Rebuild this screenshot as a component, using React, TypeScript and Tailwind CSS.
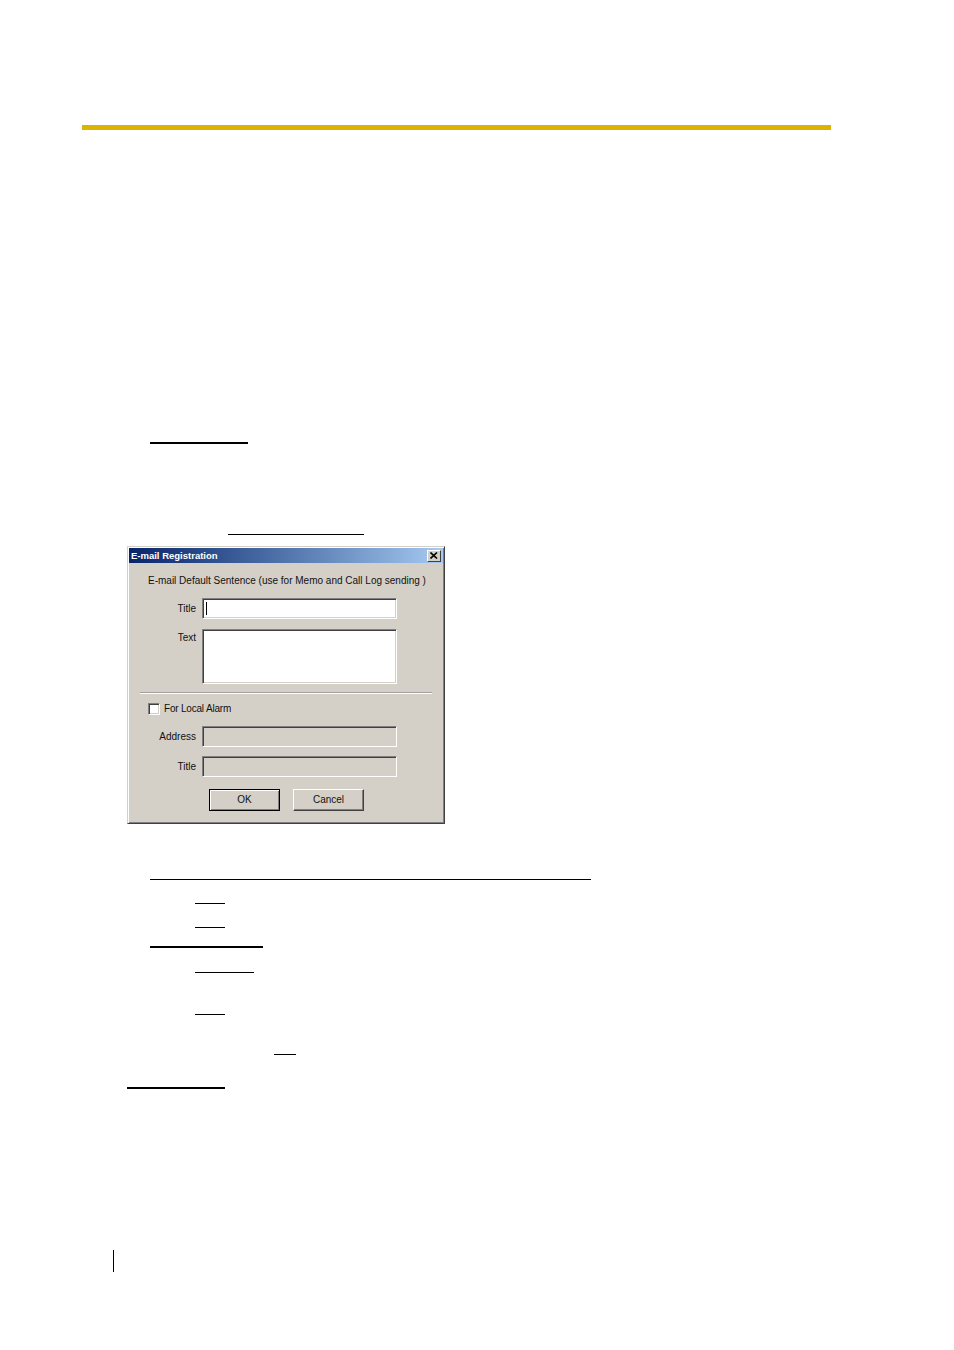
import React from 'react'

const sunken =
  'border border-t-[#808080] border-l-[#808080] border-b-white border-r-white shadow-[inset_1px_1px_0_#404040,inset_-1px_-1px_0_#d4d0c8]'

function Field({ label, disabled, tall, caret }: { label: string; disabled?: boolean; tall?: boolean; caret?: boolean }) {
  return (
    <div className={tall ? 'flex items-start' : 'flex items-center'}>
      <div className={tall ? 'w-[69px] pr-[1px] pt-[3px] text-right' : 'w-[69px] pr-[1px] text-right'}>{label}</div>
      <div
        className={`ml-[5px] w-[195px] ${tall ? 'h-[55px]' : 'h-[21px]'} ${disabled ? 'bg-[#d4d0c8]' : 'bg-white'} ${sunken} flex items-center`}
      >
        {caret && <div className="ml-[3px] h-[13px] w-[1px] bg-black" />}
      </div>
    </div>
  )
}

function Button({ label, isDefault }: { label: string; isDefault?: boolean }) {
  return (
    <div
      className={`flex h-[22px] w-[71px] items-center justify-center bg-[#d4d0c8] ${
        isDefault
          ? 'border border-black shadow-[inset_1px_1px_0_white,inset_-1px_-1px_0_#808080]'
          : 'border border-t-white border-l-white border-r-[#404040] border-b-[#404040] shadow-[inset_-1px_-1px_0_#808080]'
      }`}
    >
      {label}
    </div>
  )
}

function EmailDialog() {
  return (
    <div className="ml-[127px] flex h-[278px] w-[318px] flex-col border border-t-[#d4d0c8] border-l-[#d4d0c8] border-r-[#404040] border-b-[#404040] bg-[#d4d0c8] font-['Liberation_Sans',sans-serif] text-[10px] leading-[12px] text-[#111] shadow-[inset_1px_1px_0_white,inset_-1px_-1px_0_#808080]">
      <div className="mx-[1px] mt-[1px] flex h-[15px] items-center justify-between bg-gradient-to-r from-[#0a246a] to-[#a6caf0] pl-[2px] pr-[2px]">
        <span className="text-[9.5px] font-bold text-white">E-mail Registration</span>
        <div className="flex h-[12px] w-[14px] items-center justify-center border border-t-white border-l-white border-r-[#404040] border-b-[#404040] bg-[#d4d0c8]">
          <svg width="8" height="7" viewBox="0 0 8 7">
            <path d="M0.5 0.5 L7 6.5 M7 0.5 L0.5 6.5" stroke="black" strokeWidth="1.6" />
          </svg>
        </div>
      </div>
      <div className="mt-[12px] pl-[20px]">E-mail Default Sentence (use for Memo and Call Log sending )</div>
      <div className="mt-[11px]">
        <Field label="Title" caret />
      </div>
      <div className="mt-[10px]">
        <Field label="Text" tall />
      </div>
      <div className="ml-[12px] mt-[8px] h-[2px] w-[292px] border-t border-t-[#a0a0a0] border-b border-b-white" />
      <div className="ml-[20px] mt-[9px] flex items-center gap-[4px]">
        <div className={`h-[12px] w-[12px] bg-white ${sunken}`} />
        <span className="tracking-[-0.2px]">For Local Alarm</span>
      </div>
      <div className="mt-[11px]">
        <Field label="Address" disabled />
      </div>
      <div className="mt-[9px]">
        <Field label="Title" disabled />
      </div>
      <div className="ml-[81px] mt-[12px] flex gap-[13px]">
        <Button label="OK" isDefault />
        <Button label="Cancel" />
      </div>
    </div>
  )
}

export default function App() {
  return (
    <div className="flex h-[1350px] w-[954px] flex-col bg-white">
      <div className="ml-[82px] mt-[125px] h-[5px] w-[749px] bg-[#dcb400]" />
      <div className="ml-[150px] mt-[312px] h-[2px] w-[98px] bg-black" />
      <div className="ml-[228px] mt-[90px] h-[1px] w-[136px] bg-black" />
      <div className="mt-[11px]">
        <EmailDialog />
      </div>
      <div className="ml-[150px] mt-[55px] h-[1px] w-[441px] bg-black" />
      <div className="ml-[195px] mt-[23px] h-[1px] w-[30px] bg-black" />
      <div className="ml-[195px] mt-[23px] h-[1px] w-[30px] bg-black" />
      <div className="ml-[150px] mt-[18px] h-[2px] w-[113px] bg-black" />
      <div className="ml-[195px] mt-[24px] h-[1px] w-[59px] bg-black" />
      <div className="ml-[195px] mt-[41px] h-[1px] w-[30px] bg-black" />
      <div className="ml-[274px] mt-[39px] h-[1px] w-[22px] bg-black" />
      <div className="ml-[127px] mt-[32px] h-[2px] w-[98px] bg-black" />
      <div className="ml-[113px] mt-[161px] h-[22px] w-[1px] bg-black" />
    </div>
  )
}
